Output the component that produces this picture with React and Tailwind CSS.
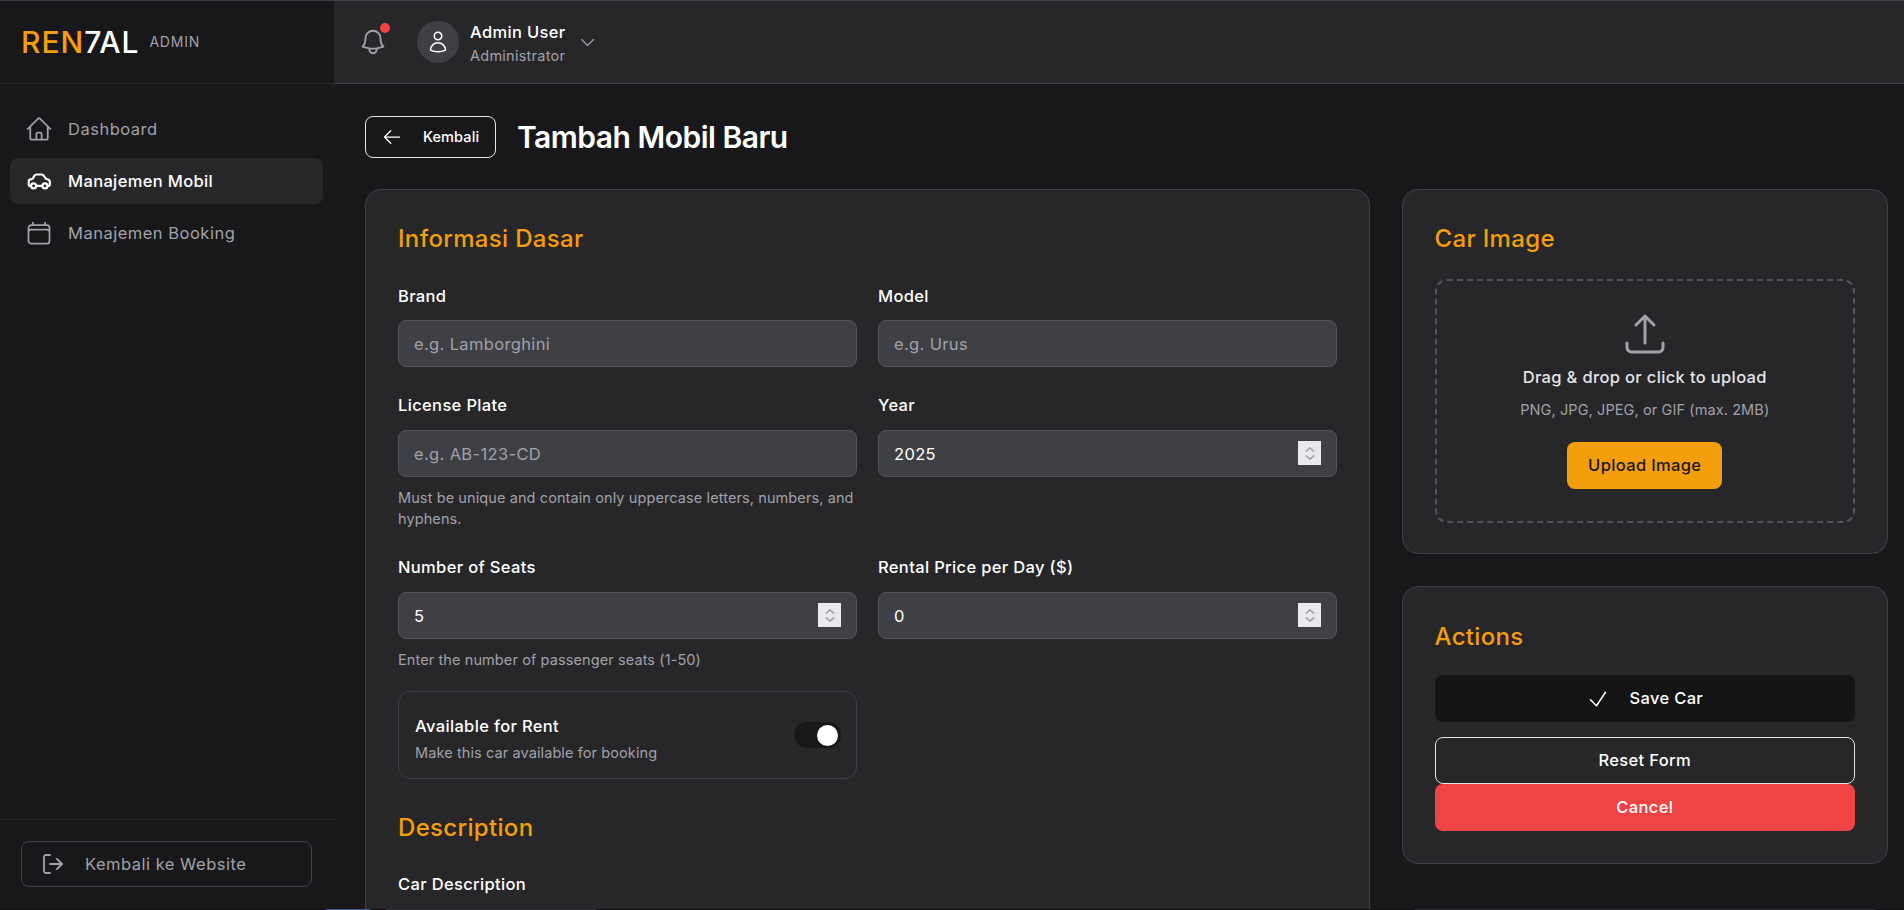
import {
  HiOutlineHome,
  HiOutlineCalendar,
  HiOutlineBell,
  HiOutlineUser,
  HiOutlineChevronDown,
  HiOutlineArrowLeft,
  HiOutlineCheck,
  HiOutlineArrowUpTray,
} from "react-icons/hi2";
import { LogOut } from "lucide-react";

function CarIcon({ className }) {
  return (
    <svg viewBox="0 0 24 24" fill="none" stroke="currentColor" strokeWidth="2" strokeLinecap="round" strokeLinejoin="round" className={className}>
      <path d="M4.500 16.500H3.500a1 1 0 0 1-1-1v-3c0-1 .7-1.800 1.700-2L6 10l1.800-2.900c.4-.6 1-1.100 1.800-1.100h4.800c.7 0 1.300.3 1.700.8L18.500 10l2 .7c.9.3 1.500 1.100 1.500 2v2.800a1 1 0 0 1-1 1h-1" />
      <path d="M9.500 16.500h5.500" />
      <circle cx="7" cy="16.500" r="2.300" />
      <circle cx="17.500" cy="16.500" r="2.300" />
    </svg>
  );
}

function Label({ children, className = "mb-[13px]" }) {
  return <label className={`block text-[16.5px] leading-6 font-[450] text-white ${className}`}>{children}</label>;
}

function Hint({ children }) {
  return <p className="mt-2.5 text-[14.5px] leading-[21px] tracking-[0.1px] text-[#a1a1aa]">{children}</p>;
}

function Input({ placeholder, value, spinner }) {
  return (
    <div className="relative">
      <input
        type="text"
        readOnly
        placeholder={placeholder}
        value={value ?? ""}
        className="w-full h-[47px] px-[15px] rounded-lg bg-[#3f3f46] border border-[#52525b] text-[16.5px] text-white placeholder-[#a1a1aa] outline-none"
      />
      {spinner && (
        <div className="absolute right-[16px] top-[11px] w-[23px] h-[24px] bg-[#e9e9ed] flex flex-col items-center justify-center text-[#a0a0aa]">
          <svg viewBox="0 0 12 6" className="w-[10px] h-[5px] mb-[3px]" fill="none" stroke="currentColor" strokeWidth="1.800">
            <path d="M1 5.500 6 1l5 4.500" />
          </svg>
          <svg viewBox="0 0 12 6" className="w-[10px] h-[5px]" fill="none" stroke="currentColor" strokeWidth="1.800">
            <path d="M1 .5 6 5l5-4.500" />
          </svg>
        </div>
      )}
    </div>
  );
}

function SectionTitle({ children, className = "" }) {
  return <h2 className={`text-2xl leading-8 font-medium tracking-[0.33px] text-[#f59e0b] ${className}`}>{children}</h2>;
}

function Sidebar() {
  const items = [
    { name: "Dashboard", icon: <HiOutlineHome className="w-7 h-7" /> },
    { name: "Manajemen Mobil", icon: <CarIcon className="w-[26px] h-[26px]" />, active: true },
    { name: "Manajemen Booking", icon: <HiOutlineCalendar className="w-7 h-7" /> },
  ];

  return (
    <aside className="w-[334px] shrink-0 flex flex-col bg-[#18181b]">
      <div className="h-[83px] shrink-0 border-b border-[#27272a] flex items-center pl-[21px]">
        <span className="text-[30px] leading-none font-medium tracking-[1px] text-white">
          <span className="text-[#f59e0b]">REN</span>7AL
        </span>
        <span className="ml-[10px] text-sm tracking-[0.8px] text-[#a1a1aa]">ADMIN</span>
      </div>

      {/* Nav */}
      <nav className="flex-1 pt-[22px] px-2.5 pr-[11px] flex flex-col gap-1.5">
        {items.map((item, index) => (
          <div
            key={index}
            className={`h-[46px] flex items-center gap-[13px] pl-[17px] rounded-lg text-[16.5px] ${
              item.active ? "bg-[#27272a] text-white font-[450]" : "text-[#a1a1aa] tracking-[0.5px]"
            }`}
          >
            <span className="w-7 flex justify-center -ml-0.5 mr-0.5">{item.icon}</span>
            <span>{item.name}</span>
          </div>
        ))}
      </nav>

      <div className="border-t border-[#27272a] pt-[21px] pb-[22px] px-[21px] pr-[22px]">
        <div className="h-[46px] flex items-center gap-[20px] pl-[19px] rounded-lg border border-[#3f3f46] text-[16.5px] tracking-[0.5px] text-[#a1a1aa]">
          <LogOut className="w-6 h-6" strokeWidth={1.800} />
          <span>Kembali ke Website</span>
        </div>
      </div>
    </aside>
  );
}

function Header() {
  return (
    <header className="h-[83px] shrink-0 bg-[#27272a] border-b border-[#3f3f46] flex items-center pl-6">
      <div className="relative text-[#a1a1aa]">
        <HiOutlineBell className="w-[30px] h-[30px]" />
        <span className="absolute -top-[4px] right-[-2px] w-2.5 h-2.5 rounded-full bg-[#ef4444]" />
      </div>
      <div className="ml-[29px] w-[42px] h-[42px] rounded-full bg-[#3f3f46] flex items-center justify-center text-white">
        <HiOutlineUser className="w-6 h-6" />
      </div>
      <div className="ml-[11px] pt-0.5">
        <p className="text-[16.5px] leading-6 font-[450] text-white">Admin User</p>
        <p className="text-[14.5px] leading-5 mt-0.5 tracking-[0.25px] text-[#a1a1aa]">Administrator</p>
      </div>
      <HiOutlineChevronDown className="ml-[12px] w-[19px] h-[19px] text-[#a1a1aa]" />
    </header>
  );
}

function App() {
  return (
    <div className="h-[910px] w-[1904px] overflow-hidden flex flex-col bg-[#18181b] tracking-[0.35px] font-['Inter',sans-serif]">
      <div className="h-px shrink-0 bg-[#3a3f4a]" />
      <div className="flex-1 min-h-0 flex">
        <Sidebar />
        <div className="flex-1 min-w-0 flex flex-col">
          <Header />
          <main className="flex-1 min-h-0 overflow-hidden pl-[31px] pr-[16px] pt-8">
            <div className="flex items-center gap-[21px] mb-[31px]">
              <button className="w-[131px] h-[42px] flex items-center gap-[21px] pl-[16px] rounded-lg border border-[#e4e4e7] text-[14.5px] font-[450] tracking-[0.1px] text-white">
                <HiOutlineArrowLeft className="w-5 h-5" />
                Kembali
              </button>
              <h1 className="text-[30px] leading-9 font-semibold tracking-[-0.5px] text-white">Tambah Mobil Baru</h1>
            </div>

            <div className="grid grid-cols-[1005px_486.5px] gap-x-[31.5px] items-start">
              {/* Form */}
              <div className="rounded-2xl border border-[#3f3f46] bg-[#27272a] p-8 pb-20">
                <SectionTitle className="mt-px mb-[29px]">Informasi Dasar</SectionTitle>
                <div className="grid grid-cols-2 gap-x-[21px] gap-y-[26px] items-start">
                  <div>
                    <Label className="mb-3">Brand</Label>
                    <Input placeholder="e.g. Lamborghini" />
                  </div>
                  <div>
                    <Label className="mb-3">Model</Label>
                    <Input placeholder="e.g. Urus" />
                  </div>
                  <div>
                    <Label>License Plate</Label>
                    <Input placeholder="e.g. AB-123-CD" />
                    <Hint>Must be unique and contain only uppercase letters, numbers, and hyphens.</Hint>
                  </div>
                  <div>
                    <Label>Year</Label>
                    <Input value="2025" spinner />
                  </div>
                  <div>
                    <Label>Number of Seats</Label>
                    <Input value="5" spinner />
                    <Hint>Enter the number of passenger seats (1-50)</Hint>
                  </div>
                  <div>
                    <Label>Rental Price per Day ($)</Label>
                    <Input value="0" spinner />
                  </div>
                </div>

                <div className="mt-[21px] w-[459px] h-[88px] rounded-xl border border-[#3f3f46] flex items-center justify-between pl-4 pr-[15px]">
                  <div className="pt-[6px]">
                    <p className="text-[16.5px] leading-6 font-[450] text-white">Available for Rent</p>
                    <p className="text-[14.5px] leading-5 mt-[5px] tracking-[0.1px] text-[#a1a1aa]">Make this car available for booking</p>
                  </div>
                  <div className="w-[47px] h-[26px] rounded-full bg-[#18181b] flex items-center justify-end pr-[3px]">
                    <span className="w-[21px] h-[21px] rounded-full bg-white" />
                  </div>
                </div>

                <SectionTitle className="mt-[33px] mb-[28px]">Description</SectionTitle>
                <Label>Car Description</Label>
                <div className="h-32 rounded-lg bg-[#3f3f46] border border-[#52525b]" />
              </div>

              {/* Side column */}
              <div className="flex flex-col gap-8">
                <div className="rounded-2xl border border-[#3f3f46] bg-[#27272a] p-8 pb-[30px]">
                  <SectionTitle className="mt-px mb-[24px]">Car Image</SectionTitle>
                  <div className="h-[244px] rounded-xl border-2 border-dashed border-[#52525b] flex flex-col items-center pt-[29px]">
                    <HiOutlineArrowUpTray className="w-12 h-12 text-[#a1a1aa]" />
                    <p className="mt-[7px] text-[16.5px] leading-6 font-[450] text-[#e4e4e7]">Drag &amp; drop or click to upload</p>
                    <p className="mt-[11px] text-[14.5px] leading-5 tracking-[0.1px] text-[#a1a1aa]">PNG, JPG, JPEG, or GIF (max. 2MB)</p>
                    <button className="mt-[22px] w-[155px] h-[47px] rounded-lg bg-[#f59e0b] text-[16.5px] font-[450] text-[#18181b]">
                      Upload Image
                    </button>
                  </div>
                </div>

                <div className="rounded-2xl border border-[#3f3f46] bg-[#27272a] p-8">
                  <SectionTitle className="mt-[2px] mb-[22px]">Actions</SectionTitle>
                  <button className="w-full h-[47px] mb-[15px] rounded-lg bg-[#141414] flex items-center justify-center gap-[19px] text-[16.5px] font-[450] text-white">
                    <HiOutlineCheck className="w-6 h-6" />
                    Save Car
                  </button>
                  <button className="w-full h-[47px] rounded-lg border border-[#e4e4e7] text-[16.5px] font-[450] text-white">
                    Reset Form
                  </button>
                  <button className="w-full h-[47px] rounded-lg bg-[#ef4444] text-[16.5px] font-[450] text-white">
                    Cancel
                  </button>
                </div>
              </div>
            </div>
          </main>
        </div>
      </div>
      {/* strip of the window below, cut off at the bottom edge */}
      <div className="h-px shrink-0 bg-[#101012] flex">
        <div className="ml-[326px] w-[44px] bg-[#3b5a94]" />
        <div className="ml-[16px] w-[210px] bg-[#2f3136]" />
        <div className="ml-[819px] w-[460px] bg-[#2f3136]" />
      </div>
    </div>
  );
}

export default App;
